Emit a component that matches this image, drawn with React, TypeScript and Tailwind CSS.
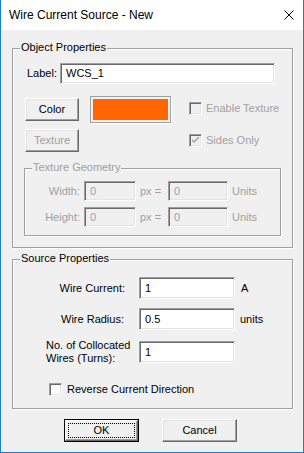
import React from "react";

const font = { fontFamily: '"Liberation Sans", Arial, sans-serif' };

function Sunken({ w, h, value, disabled }: { w: string; h: string; value: string; disabled?: boolean }) {
  return (
    <div
      className={`${w} ${h} box-border border-t border-l border-[#a0a0a0] border-b border-r border-b-white border-r-white shadow-[inset_1px_1px_0_#696969,inset_-1px_-1px_0_#e3e3e3] flex items-center pl-[5px] ${
        disabled ? "bg-[#f0f0f0] text-[#a0a0a0]" : "bg-white text-black"
      }`}
    >
      {value}
    </div>
  );
}

function Button({ w, label, disabled, isDefault }: { w: string; label: string; disabled?: boolean; isDefault?: boolean }) {
  if (isDefault) {
    return (
      <div className={`${w} h-[23px] box-border border border-black bg-[#f0f0f0] flex`}>
        <div className="flex-1 box-border border border-t-white border-l-white border-b-[#696969] border-r-[#696969] shadow-[inset_-1px_-1px_0_#a0a0a0] flex p-[2px]">
          <div className="flex-1 border border-dotted border-black flex items-center justify-center text-black">{label}</div>
        </div>
      </div>
    );
  }
  return (
    <div
      className={`${w} h-[23px] box-border border border-t-white border-l-white border-b-[#696969] border-r-[#696969] shadow-[inset_-1px_-1px_0_#a0a0a0,inset_1px_1px_0_#e3e3e3] bg-[#f0f0f0] flex items-center justify-center ${
        disabled ? "text-[#a0a0a0]" : "text-black"
      }`}
    >
      {label}
    </div>
  );
}

function Check({ checked, disabled }: { checked?: boolean; disabled?: boolean }) {
  return (
    <div
      className={`w-[13px] h-[13px] box-border border-t border-l border-[#a0a0a0] border-b border-r border-b-white border-r-white shadow-[inset_1px_1px_0_#696969,inset_-1px_-1px_0_#e3e3e3] flex items-center justify-center ${
        disabled ? "bg-[#f0f0f0]" : "bg-white"
      }`}
    >
      {checked && (
        <svg width="7" height="7" viewBox="0 0 7 7">
          <path d="M0 2 L0 4 L2 6 L7 1 L7 -1 L2 4 Z" fill={disabled ? "#a0a0a0" : "#000"} />
        </svg>
      )}
    </div>
  );
}

function Group({ title, className, children, disabled }: { title: string; className: string; children?: React.ReactNode; disabled?: boolean }) {
  return (
    <div className={`relative box-border border border-[#a0a0a0] shadow-[inset_1px_1px_0_#fff,1px_1px_0_#fff] ${className}`}>
      <div className={`absolute top-[-8px] left-[7px] px-[1px] bg-[#f0f0f0] leading-[13px] ${disabled ? "text-[#a0a0a0]" : "text-black"}`}>
        {title}
      </div>
      {children}
    </div>
  );
}

export default function App() {
  return (
    <div
      className="w-[304px] h-[453px] box-border border-l border-r border-b border-[#1a7fd4] bg-[#f0f0f0] flex flex-col text-[11px] leading-[13px] text-black overflow-hidden"
      style={font}
    >
      {/* Title bar */}
      <div className="h-[30px] bg-white flex items-center justify-between shrink-0">
        <span className="ml-[8px] text-[12px] text-black">Wire Current Source - New</span>
        <svg width="10" height="10" viewBox="0 0 10 10" className="mr-[9px]">
          <path d="M0.5 0.5 L9.5 9.5 M9.5 0.5 L0.5 9.5" stroke="#000" strokeWidth="1" />
        </svg>
      </div>

      {/* Object Properties */}
      <Group title="Object Properties" className="ml-[11px] mt-[18px] w-[281px] h-[200px] flex flex-col shrink-0">
        <div className="flex items-center mt-[14px] ml-[14px]">
          <div className="w-[33px]">Label:</div>
          <Sunken w="w-[215px]" h="h-[21px]" value="WCS_1" />
        </div>
        <div className="flex items-start mt-[12px] ml-[12px]">
          <div className="mt-[2px]">
            <Button w="w-[54px]" label="Color" />
          </div>
          <div className="ml-[11px] w-[81px] h-[27px] box-border border border-[#a0a0a0] bg-[#f0f0f0] p-[2px] shadow-[1px_1px_0_#fff]">
            <div className="w-full h-full bg-[#ff6600]" />
          </div>
          <div className="ml-[18px] mt-[6px] flex items-center text-[#a0a0a0]">
            <Check disabled />
            <span className="ml-[4px]">Enable Texture</span>
          </div>
        </div>
        <div className="flex items-start mt-[6px] ml-[12px]">
          <Button w="w-[54px]" label="Texture" disabled />
          <div className="ml-[110px] mt-[5px] flex items-center text-[#a0a0a0]">
            <Check checked disabled />
            <span className="ml-[4px]">Sides Only</span>
          </div>
        </div>
        <Group title="Texture Geometry" disabled className="ml-[11px] mt-[16px] w-[257px] h-[68px] flex flex-col text-[#a0a0a0]">
          <div className="flex items-center mt-[12px]">
            <div className="w-[55px] text-right">Width:</div>
            <div className="ml-[4px]">
              <Sunken w="w-[52px]" h="h-[20px]" value="0" disabled />
            </div>
            <div className="ml-[4px] w-[28px]">px =</div>
            <Sunken w="w-[60px]" h="h-[20px]" value="0" disabled />
            <div className="ml-[4px]">Units</div>
          </div>
          <div className="flex items-center mt-[6px]">
            <div className="w-[55px] text-right">Height:</div>
            <div className="ml-[4px]">
              <Sunken w="w-[52px]" h="h-[20px]" value="0" disabled />
            </div>
            <div className="ml-[4px] w-[28px]">px =</div>
            <Sunken w="w-[60px]" h="h-[20px]" value="0" disabled />
            <div className="ml-[4px]">Units</div>
          </div>
        </Group>
      </Group>

      {/* Source Properties */}
      <Group title="Source Properties" className="ml-[11px] mt-[11px] w-[281px] h-[150px] flex flex-col shrink-0">
        <div className="flex items-center mt-[17px]">
          <div className="w-[126px] text-right pr-[14px]">Wire Current:</div>
          <Sunken w="w-[96px]" h="h-[22px]" value="1" />
          <div className="ml-[6px]">A</div>
        </div>
        <div className="flex items-center mt-[9px]">
          <div className="w-[126px] text-right pr-[15px]">Wire Radius:</div>
          <Sunken w="w-[96px]" h="h-[22px]" value="0.5" />
          <div className="ml-[5px]">units</div>
        </div>
        <div className="flex items-center mt-[9px]">
          <div className="w-[126px] pl-[33px]">
            <div>No. of Collocated</div>
            <div>Wires (Turns):</div>
          </div>
          <Sunken w="w-[96px]" h="h-[22px]" value="1" />
        </div>
        <div className="flex items-center mt-[18px] ml-[36px]">
          <Check />
          <span className="ml-[5px]">Reverse Current Direction</span>
        </div>
      </Group>

      {/* Buttons */}
      <div className="flex mt-[10px] ml-[63px]">
        <Button w="w-[75px]" label="OK" isDefault />
        <div className="ml-[23px]">
          <Button w="w-[75px]" label="Cancel" />
        </div>
      </div>
    </div>
  );
}
